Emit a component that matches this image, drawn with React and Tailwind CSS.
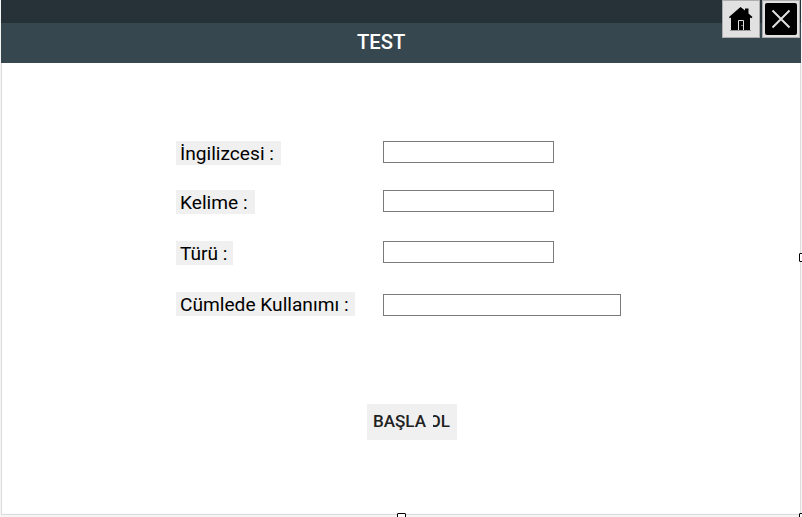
const rows = [
  { label: "İngilizcesi :", row: "h-[49px]", box: "w-[105px]", input: "w-[171px]" },
  { label: "Kelime :", row: "h-[51px]", box: "w-[79px]", input: "w-[171px]" },
  { label: "Türü :", row: "h-[51px]", box: "w-[57px]", input: "w-[171px]" },
  { label: "Cümlede Kullanımı :", row: "h-6", box: "w-[179px]", input: "w-[238px] mt-0.5" },
];

function HomeIcon() {
  return (
    <svg width="24" height="24" viewBox="0 0 24 24">
      <path d="M11.500 0L16 3.600V1.500H19.500V6.500L23.500 10L22.500 11.200L21 10.500V23H2V10.500L0.700 11.200L0 10Z" fill="#000" />
      <path d="M9.500 23V13.500H14.500V23" fill="none" stroke="#e1e1e1" />
      <path d="M12.500 18.500H13.500" stroke="#e1e1e1" />
      <path d="M1 23.500H22" stroke="#999" />
    </svg>
  );
}

export default function App() {
  return (
    <div className="relative h-[517px] w-[802px] overflow-hidden bg-[#f5f5f5] pl-px font-[Roboto,sans-serif]">
      <div className="flex h-[515px] w-[800px] flex-col border-b border-[#dcdcdc] bg-white">
        <header className="relative h-[63px] shrink-0">
          <div className="h-[23px] bg-[#263238]" />
          <div className="flex h-10 items-start bg-[#37474f] pt-[7px] pl-[356px]">
            <h1 className="text-[20.2px] leading-6 font-medium text-white">TEST</h1>
          </div>
          <div className="absolute top-0 right-px flex gap-0.5">
            <button className="flex h-[38px] w-[38px] items-center justify-center border border-[#adadad] bg-[#e1e1e1] pr-px pb-px">
              <HomeIcon />
            </button>
            <button className="flex h-[38px] w-[38px] items-center justify-center border border-[#adadad] bg-[#e1e1e1]">
              <svg width="32" height="32" viewBox="0 0 32 32">
                <rect width="32" height="32" rx="2" fill="#000" />
                <path d="M7.500 7.500L24.500 24.500M24.500 7.500L7.500 24.500" stroke="#e1e1e1" strokeWidth="2" />
              </svg>
            </button>
          </div>
        </header>
        <main className="flex-1 border-x border-[#dcdcdc] pt-[78px] pl-[174px]">
          {rows.map((r) => (
            <div key={r.label} className={`flex items-start ${r.row}`}>
              <div className="w-[207px]">
                <label className={`block h-6 bg-[#f0f0f0] pl-1 text-[19.15px] leading-[26px] whitespace-nowrap text-black ${r.box}`}>
                  {r.label}
                </label>
              </div>
              <input className={`h-[22px] border border-[#7a7a7a] bg-white ${r.input}`} />
            </div>
          ))}
          <button className="mt-[88px] ml-[191px] flex h-9 w-[90px] items-center bg-[#f0f0f0] pb-0.5 pl-1.5 text-[17px] leading-6 font-medium text-[#212121]">
            <span className="w-[60px] text-left">BAŞLA</span>
            <span className="flex w-5 justify-end overflow-hidden pr-[3px]">OL</span>
          </button>
        </main>
      </div>
      <span className="absolute top-[513px] left-[397px] h-[9px] w-[9px] rounded-[1px] border border-black bg-white" />
      <span className="absolute top-[253px] left-[799px] h-[9px] w-[9px] rounded-[1px] border border-black bg-white" />
      <span className="absolute top-[513px] left-[799px] h-[9px] w-[9px] rounded-[1px] border border-black bg-white" />
    </div>
  );
}
